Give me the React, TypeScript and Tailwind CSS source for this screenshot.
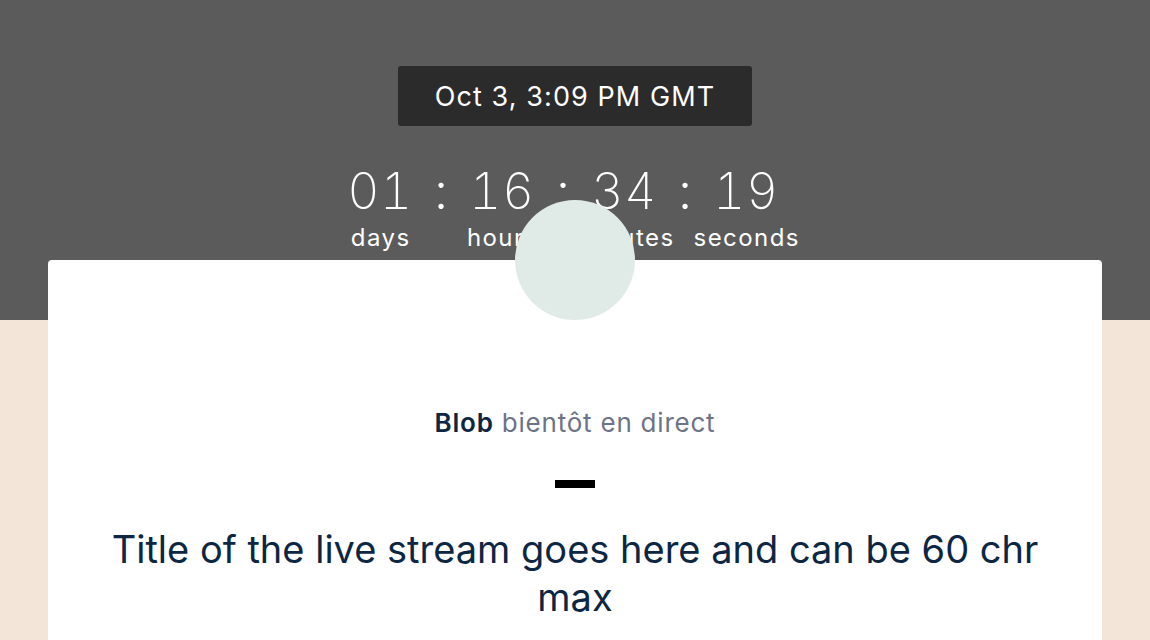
import React from "react";

const units = [
  { v: "01", l: "days" },
  { v: "16", l: "hours" },
  { v: "34", l: "minutes" },
  { v: "19", l: "seconds" },
];

export default function App() {
  return (
    <div
      className="w-[1150px] h-[640px] overflow-hidden bg-[linear-gradient(to_bottom,#5b5b5b_0,#5b5b5b_320px,#f3e5d7_320px)] text-white"
      style={{ fontFamily: "Inter, 'Noto Sans', sans-serif" }}
    >
      <div className="flex flex-col items-center pt-[66px]">
        <div className="h-[60px] w-[354px] rounded-[3px] bg-[#2b2b2b] flex items-center justify-center text-[27px] leading-none tracking-[0.04em]">
          Oct 3, 3:09 PM GMT
        </div>
        <div className="mt-[40px] flex justify-center pr-[24px]">
          {units.map((u, i) => (
            <React.Fragment key={u.l}>
              {i > 0 && (
                <div className="w-[30px] flex justify-center text-[50px] leading-[50px] font-light">:</div>
              )}
              <div className="w-[92px] flex flex-col items-center">
                <div className="text-[50px] leading-[50px] font-extralight whitespace-nowrap tabular-nums tracking-[0.01em]">{u.v}</div>
                <div className="mt-[10px] text-[24px] leading-[24px] whitespace-nowrap tracking-[0.06em] pl-[0.06em]">{u.l}</div>
              </div>
            </React.Fragment>
          ))}
        </div>
      </div>
      <div className="relative mx-[48px] mt-[10px] h-[400px] rounded-[4px] bg-white flex flex-col items-center pt-[147px] px-[48px]">
        <div className="absolute left-1/2 top-[-60px] -translate-x-1/2 w-[120px] h-[120px] rounded-full bg-[#e0ebe7]" />
        <div className="text-[26px] leading-[32px] whitespace-nowrap tracking-[0.03em]">
          <span className="font-semibold text-[#0c2643]">Blob</span>{" "}
          <span className="text-[#6d7386]">bientôt en direct</span>
        </div>
        <div className="mt-[41px] w-[40px] h-[8px] bg-black" />
        <div className="mt-[37px] text-center text-[38px] leading-[48px] text-[#0c2643]">
          Title of the live stream goes here and can be 60 chr max
        </div>
      </div>
    </div>
  );
}
